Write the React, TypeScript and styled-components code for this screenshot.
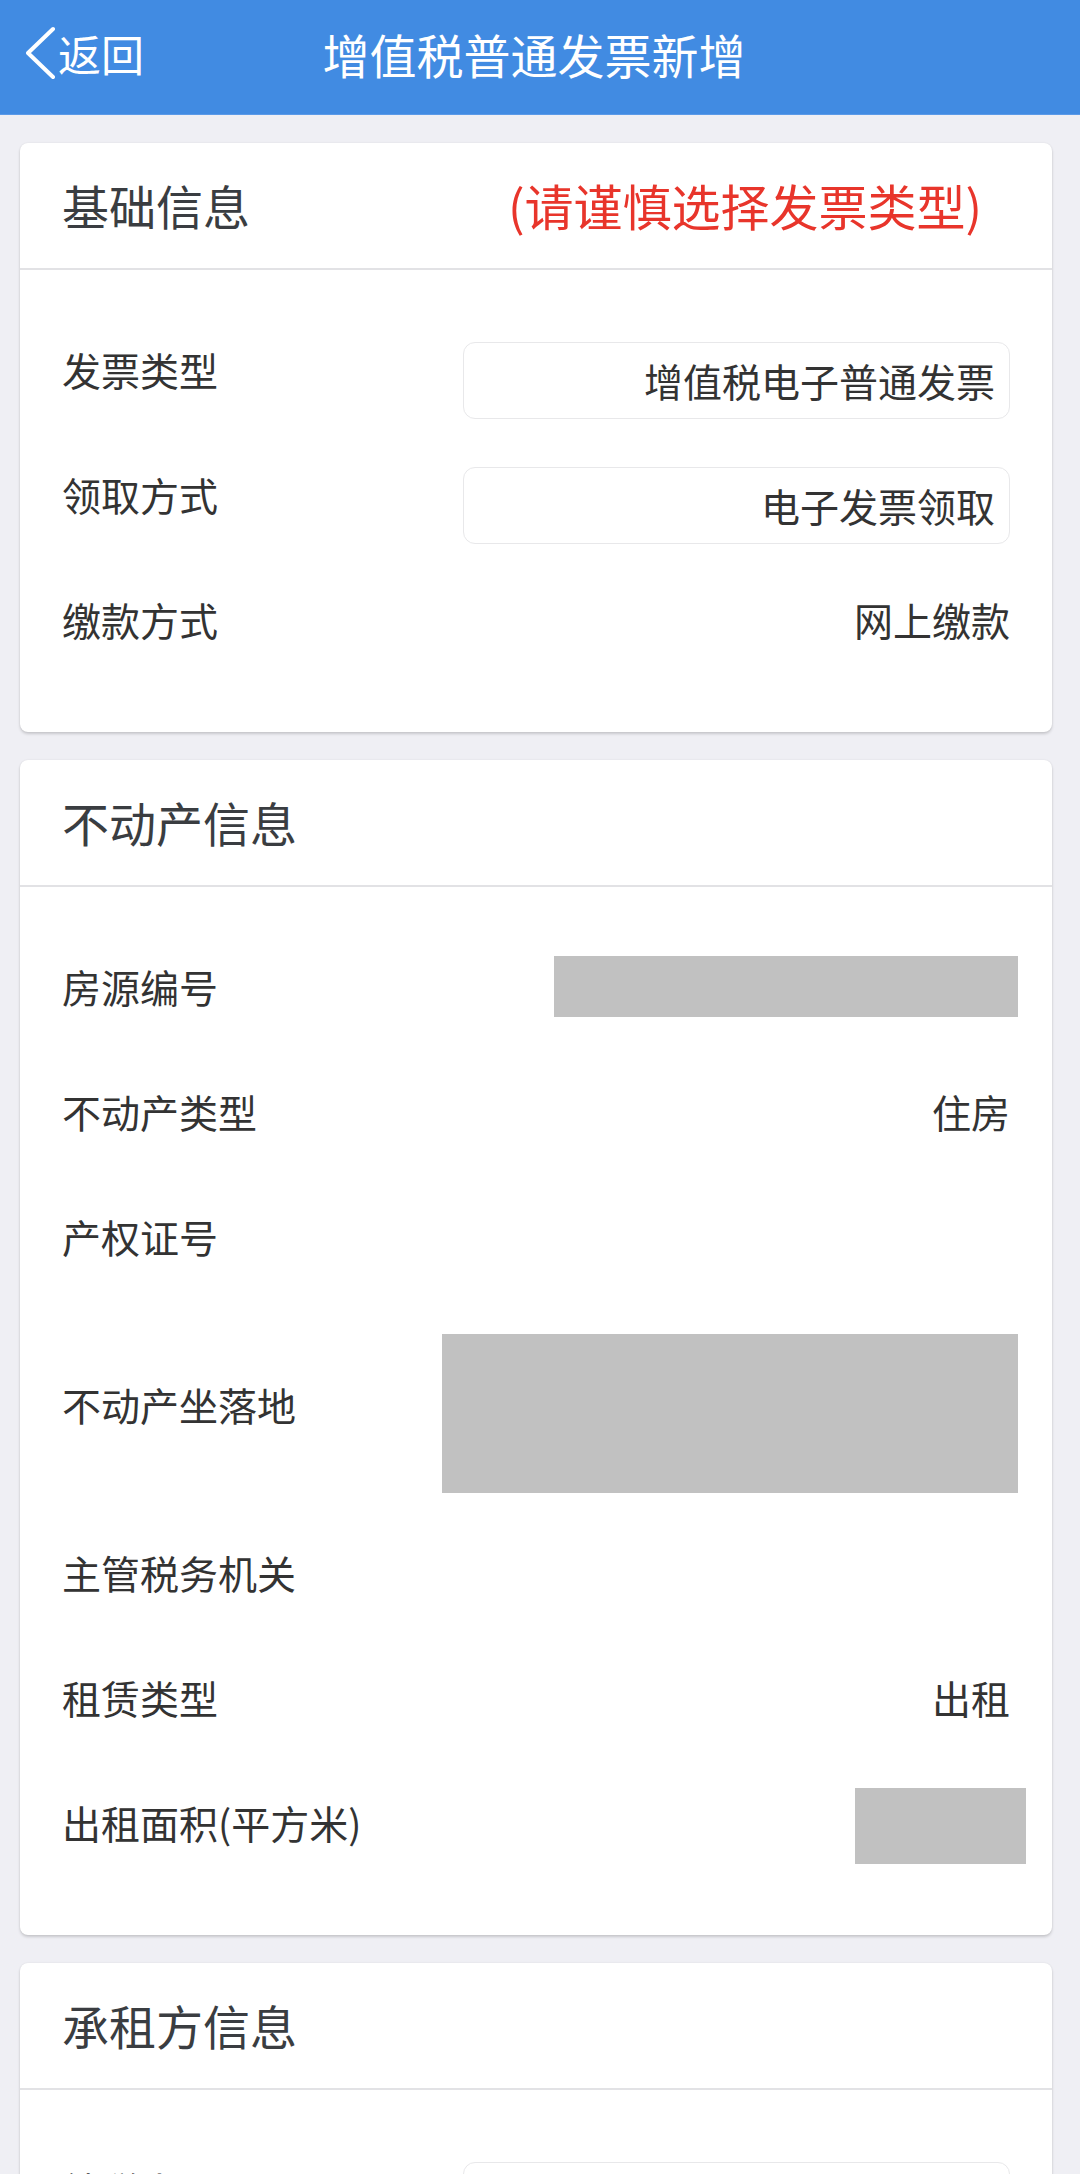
import React from "react";
import styled, { createGlobalStyle } from "styled-components";

const GlobalStyle = createGlobalStyle`
  html, body {
    margin: 0;
    padding: 0;
    background: #efeff4;
    font-family: "Noto Sans CJK SC", "Noto Sans", sans-serif;
  }
  * { box-sizing: border-box; }
`;

const Page = styled.div`
  min-height: 2174px;
  background: #efeff4;
`;

const Header = styled.header`
  height: 115px;
  background: #418be2;
  border-bottom: 1px solid #5b9ae8;
  display: grid;
  grid-template-columns: 1fr auto 1fr;
  align-items: center;
  padding-bottom: 8px;
  color: #fff;
`;

const Back = styled.div`
  display: flex;
  align-items: center;
  padding-left: 26px;
  gap: 2px;
  font-size: 43px;
  line-height: 1;
`;

const Title = styled.h1`
  margin: 0 12px 0 0;
  font-size: 47px;
  font-weight: 400;
  line-height: 1;
  white-space: nowrap;
`;

const Content = styled.main`
  display: flex;
  flex-direction: column;
  gap: 28px;
  padding: 28px 28px 40px 20px;
`;

const Card = styled.section`
  background: #fff;
  border-radius: 8px;
  box-shadow: 0 2px 3px rgba(0, 0, 0, 0.16), 0 0 2px rgba(0, 0, 0, 0.08);
  overflow: hidden;
`;

const CardHead = styled.div`
  height: 127px;
  display: flex;
  align-items: center;
  justify-content: space-between;
  padding: 0 42px 2px 42px;
  border-bottom: 2px solid #e2e2e5;
`;

const CardTitle = styled.h2`
  margin: 0;
  font-size: 47px;
  font-weight: 400;
  color: #3a3d41;
  line-height: 1.3;
`;

const Warning = styled.span`
  font-size: 49px;
  color: #e8352b;
  line-height: 1.3;
  margin-right: 28px;
`;

const Body = styled.div`
  padding: 37px 42px 50px 42px;
  display: flex;
  flex-direction: column;
`;

const Row = styled.div<{ $h?: number }>`
  display: flex;
  align-items: center;
  justify-content: space-between;
  min-height: ${(p) => p.$h ?? 125}px;
`;

const Label = styled.span`
  font-size: 39px;
  color: #333;
  line-height: 1.4;
  white-space: nowrap;
`;

const Value = styled.span`
  font-size: 39px;
  color: #333;
  line-height: 1.4;
`;

const InputBox = styled.div`
  width: 547px;
  height: 77px;
  margin-top: 21px;
  border: 1px solid #e8e8ea;
  border-radius: 12px;
  display: flex;
  align-items: center;
  justify-content: flex-end;
  padding-right: 14px;
  font-size: 39px;
  color: #333;
`;

const Redacted = styled.div<{ $w: number; $hgt: number; $top?: number; $right?: number }>`
  width: ${(p) => p.$w}px;
  height: ${(p) => p.$hgt}px;
  margin-top: ${(p) => p.$top ?? 0}px;
  margin-right: ${(p) => -(p.$right ?? 0)}px;
  background: #c1c1c1;
`;

const Chevron = () => (
  <svg width="30" height="54" viewBox="0 0 30 54" fill="none">
    <polyline
      points="27,3 2,27 27,51"
      stroke="#fff"
      strokeWidth="4"
      strokeLinecap="round"
      strokeLinejoin="round"
    />
  </svg>
);

export default function App() {
  return (
    <Page>
      <GlobalStyle />
      <Header>
        <Back>
          <Chevron />
          <span>返回</span>
        </Back>
        <Title>增值税普通发票新增</Title>
        <div />
      </Header>
      <Content>
        <Card>
          <CardHead>
            <CardTitle>基础信息</CardTitle>
            <Warning>(请谨慎选择发票类型)</Warning>
          </CardHead>
          <Body>
            <Row>
              <Label>发票类型</Label>
              <InputBox>增值税电子普通发票</InputBox>
            </Row>
            <Row>
              <Label>领取方式</Label>
              <InputBox>电子发票领取</InputBox>
            </Row>
            <Row>
              <Label>缴款方式</Label>
              <Value>网上缴款</Value>
            </Row>
          </Body>
        </Card>

        <Card>
          <CardHead>
            <CardTitle>不动产信息</CardTitle>
          </CardHead>
          <Body>
            <Row>
              <Label>房源编号</Label>
              <Redacted $w={464} $hgt={61} $right={8} />
            </Row>
            <Row>
              <Label>不动产类型</Label>
              <Value>住房</Value>
            </Row>
            <Row>
              <Label>产权证号</Label>
            </Row>
            <Row $h={211}>
              <Label>不动产坐落地</Label>
              <Redacted $w={576} $hgt={159} $top={17} $right={8} />
            </Row>
            <Row>
              <Label>主管税务机关</Label>
            </Row>
            <Row>
              <Label>租赁类型</Label>
              <Value>出租</Value>
            </Row>
            <Row>
              <Label>出租面积(平方米)</Label>
              <Redacted $w={171} $hgt={76} $top={6} $right={16} />
            </Row>
          </Body>
        </Card>

        <Card>
          <CardHead>
            <CardTitle>承租方信息</CardTitle>
          </CardHead>
          <Body>
            <Row>
              <Label>纳税人识别号</Label>
              <InputBox />
            </Row>
          </Body>
        </Card>
      </Content>
    </Page>
  );
}
